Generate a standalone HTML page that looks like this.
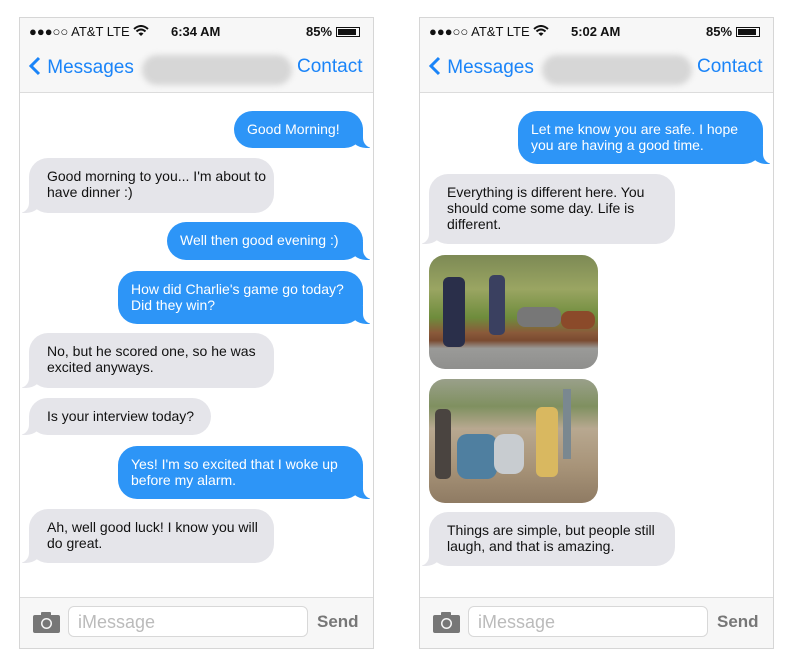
<!DOCTYPE html>
<html><head><meta charset="utf-8"><style>
*{margin:0;padding:0;box-sizing:border-box}
body{width:790px;height:664px;background:#fff;font-family:"Liberation Sans",Arial,sans-serif;position:relative;overflow:hidden}
.ph{position:absolute;top:17px;width:355px;height:632px;border:1px solid #d6d6d6;background:#fff;overflow:hidden}
.hdr{position:absolute;left:0;top:0;width:100%;height:75px;background:#f7f7f7;border-bottom:1px solid #dcdcdc}
.sb{position:absolute;top:6px;font-size:13px;color:#111;white-space:nowrap}
.nav{position:absolute;top:38px;font-size:19px;color:#1a84f8;white-space:nowrap}
.blur{position:absolute;left:122px;top:37px;width:150px;height:30px;background:#d6d6d6;border-radius:15px;filter:blur(3px)}
.b{position:absolute;font-size:14px;line-height:16px;padding:10px 0 0 18px;border-radius:19px;white-space:nowrap;z-index:1}
.me{background:#2d95f7;color:#fff;padding-left:13px}
.th{background:#e5e5ea;color:#111}
.me:before{content:"";position:absolute;z-index:-1;right:-7px;bottom:0;width:20px;height:18px;background:#2d95f7;border-bottom-left-radius:16px 14px}
.me:after{content:"";position:absolute;z-index:-1;right:-26px;bottom:0;width:26px;height:18px;background:#fff;border-bottom-left-radius:10px}
.th:before{content:"";position:absolute;z-index:-1;left:-7px;bottom:0;width:20px;height:18px;background:#e5e5ea;border-bottom-right-radius:16px 14px}
.th:after{content:"";position:absolute;z-index:-1;left:-26px;bottom:0;width:26px;height:18px;background:#fff;border-bottom-right-radius:10px}
.ftr{position:absolute;left:0;bottom:0;width:100%;height:51px;background:#f7f7f7;border-top:1px solid #dcdcdc}
.inp{position:absolute;left:48px;top:8px;width:240px;height:31px;border:1px solid #d8d8d8;border-radius:6px;background:#fff;color:#bbb;font-size:18px;padding:5px 9px}
.send{position:absolute;left:297px;top:14px;font-size:17px;color:#777;font-weight:bold}
.img{position:absolute;border-radius:16px;overflow:hidden}
</style></head><body>

<!-- LEFT PHONE -->
<div class="ph" style="left:19px">
 <div class="hdr">
  <div class="sb" style="left:9px">●●●○○ AT&amp;T LTE <svg width="16" height="12" viewBox="0 0 16 12" style="vertical-align:-1px"><path d="M1 4 Q8 -2 15 4" stroke="#111" stroke-width="2" fill="none"/><path d="M3.5 6.5 Q8 2.5 12.5 6.5" stroke="#111" stroke-width="2" fill="none"/><path d="M8 11 L5.5 8.5 Q8 6.5 10.5 8.5Z" fill="#111"/></svg></div>
  <div class="sb" style="left:151px;font-weight:bold">6:34 AM</div>
  <div class="sb" style="left:286px;font-weight:bold">85% <span style="display:inline-block;width:24px;height:10px;border:1px solid #111;vertical-align:-1px;position:relative"><span style="position:absolute;left:1px;top:1px;width:18px;height:6px;background:#111"></span></span></div>
  <div class="nav" style="left:8px"><svg width="14" height="20" viewBox="0 0 14 20" style="vertical-align:-3px"><path d="M11 2 L3 10 L11 18" stroke="#1a84f8" stroke-width="3" fill="none"/></svg> Messages</div>
  <div class="blur"></div>
  <div class="nav" style="left:277px">Contact</div>
 </div>
 <div class="b me" style="left:214px;top:93px;width:129px;height:37px">Good Morning!</div>
 <div class="b th" style="left:9px;top:140px;width:245px;height:55px">Good morning to you... I'm about to<br>have dinner :)</div>
 <div class="b me" style="left:147px;top:204px;width:196px;height:38px">Well then good evening :)</div>
 <div class="b me" style="left:98px;top:253px;width:245px;height:53px">How did Charlie's game go today?<br>Did they win?</div>
 <div class="b th" style="left:9px;top:315px;width:245px;height:55px">No, but he scored one, so he was<br>excited anyways.</div>
 <div class="b th" style="left:9px;top:380px;width:182px;height:37px">Is your interview today?</div>
 <div class="b me" style="left:98px;top:428px;width:245px;height:53px">Yes! I'm so excited that I woke up<br>before my alarm.</div>
 <div class="b th" style="left:9px;top:491px;width:245px;height:54px">Ah, well good luck! I know you will<br>do great.</div>
 <div class="ftr">
  <svg style="position:absolute;left:13px;top:14px" width="27" height="21" viewBox="0 0 27 21"><rect x="0" y="3" width="27" height="18" rx="2" fill="#777"/><rect x="8" y="0" width="10" height="5" rx="1" fill="#777"/><circle cx="13.5" cy="11.5" r="5.5" fill="#f7f7f7"/><circle cx="13.5" cy="11.5" r="4" fill="#777"/></svg>
  <div class="inp">iMessage</div>
  <div class="send">Send</div>
 </div>
</div>

<!-- RIGHT PHONE -->
<div class="ph" style="left:419px">
 <div class="hdr">
  <div class="sb" style="left:9px">●●●○○ AT&amp;T LTE <svg width="16" height="12" viewBox="0 0 16 12" style="vertical-align:-1px"><path d="M1 4 Q8 -2 15 4" stroke="#111" stroke-width="2" fill="none"/><path d="M3.5 6.5 Q8 2.5 12.5 6.5" stroke="#111" stroke-width="2" fill="none"/><path d="M8 11 L5.5 8.5 Q8 6.5 10.5 8.5Z" fill="#111"/></svg></div>
  <div class="sb" style="left:151px;font-weight:bold">5:02 AM</div>
  <div class="sb" style="left:286px;font-weight:bold">85% <span style="display:inline-block;width:24px;height:10px;border:1px solid #111;vertical-align:-1px;position:relative"><span style="position:absolute;left:1px;top:1px;width:18px;height:6px;background:#111"></span></span></div>
  <div class="nav" style="left:8px"><svg width="14" height="20" viewBox="0 0 14 20" style="vertical-align:-3px"><path d="M11 2 L3 10 L11 18" stroke="#1a84f8" stroke-width="3" fill="none"/></svg> Messages</div>
  <div class="blur"></div>
  <div class="nav" style="left:277px">Contact</div>
 </div>
 <div class="b me" style="left:98px;top:93px;width:245px;height:53px">Let me know you are safe. I hope<br>you are having a good time.</div>
 <div class="b th" style="left:9px;top:156px;width:246px;height:70px">Everything is different here. You<br>should come some day. Life is<br>different.</div>
 <div class="img" style="left:9px;top:237px;width:169px;height:114px;background:linear-gradient(180deg,#7d8a55 0%,#9aa562 30%,#6e8c3c 55%,#8a5a3a 68%,#7a4a30 75%,#9a9a98 82%,#8f8f8d 100%)">
  <div style="position:absolute;left:14px;top:22px;width:22px;height:70px;background:#2a2f4a;border-radius:6px"></div>
  <div style="position:absolute;left:60px;top:20px;width:16px;height:60px;background:#3a4060;border-radius:5px"></div>
  <div style="position:absolute;left:88px;top:52px;width:44px;height:20px;background:#777;border-radius:8px"></div>
  <div style="position:absolute;left:132px;top:56px;width:34px;height:18px;background:#8b4a2a;border-radius:8px"></div>
 </div>
 <div class="img" style="left:9px;top:361px;width:169px;height:124px;background:linear-gradient(180deg,#9aa08a 0%,#7f9060 22%,#b8a890 40%,#a89479 70%,#8f7b63 100%)">
  <div style="position:absolute;left:6px;top:30px;width:16px;height:70px;background:#4a4440;border-radius:5px"></div>
  <div style="position:absolute;left:28px;top:55px;width:40px;height:45px;background:#4f7fa0;border-radius:10px"></div>
  <div style="position:absolute;left:65px;top:55px;width:30px;height:40px;background:#c8ccd0;border-radius:10px"></div>
  <div style="position:absolute;left:107px;top:28px;width:22px;height:70px;background:#d9b860;border-radius:6px"></div>
  <div style="position:absolute;left:134px;top:10px;width:8px;height:70px;background:#7a8890"></div>
 </div>
 <div class="b th" style="left:9px;top:494px;width:246px;height:54px">Things are simple, but people still<br>laugh, and that is amazing.</div>
 <div class="ftr">
  <svg style="position:absolute;left:13px;top:14px" width="27" height="21" viewBox="0 0 27 21"><rect x="0" y="3" width="27" height="18" rx="2" fill="#777"/><rect x="8" y="0" width="10" height="5" rx="1" fill="#777"/><circle cx="13.5" cy="11.5" r="5.5" fill="#f7f7f7"/><circle cx="13.5" cy="11.5" r="4" fill="#777"/></svg>
  <div class="inp">iMessage</div>
  <div class="send">Send</div>
 </div>
</div>
</body></html>
